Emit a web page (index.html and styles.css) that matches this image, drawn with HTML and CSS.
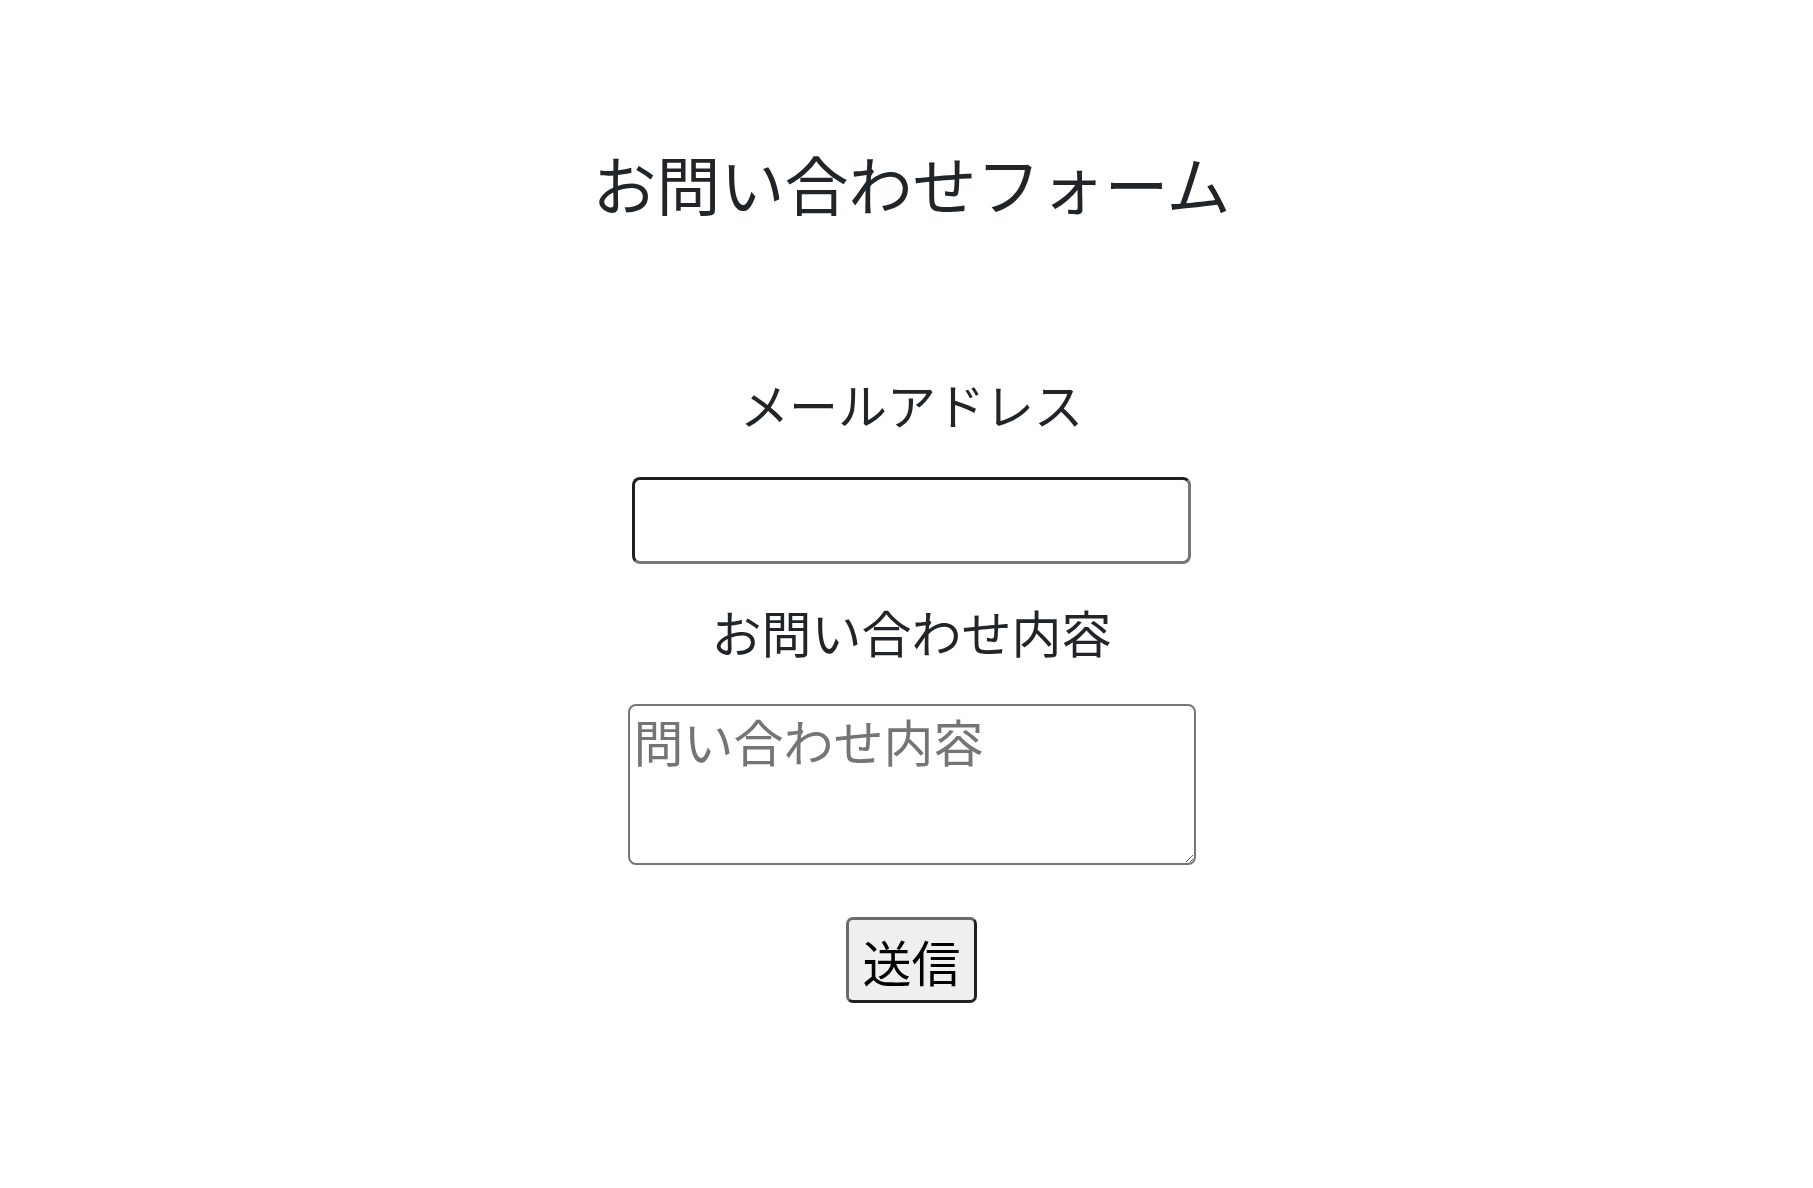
FILE: index.html
```html
<!DOCTYPE html>
<html lang="ja">
<head>
<meta charset="utf-8">
<title>お問い合わせフォーム</title>
<link rel="stylesheet" href="styles.css">
</head>
<body>
<main class="page">
  <h1 class="title">お問い合わせフォーム</h1>
  <form class="form">
    <label class="label label-email" for="email">メールアドレス</label>
    <input class="email" id="email" type="email">
    <label class="label label-message" for="message">お問い合わせ内容</label>
    <textarea class="message" id="message" placeholder="問い合わせ内容"></textarea>
    <button class="submit" type="submit">送信</button>
  </form>
</main>
</body>
</html>
```

FILE: styles.css
```css
html, body {
  margin: 0;
  padding: 0;
  background: #ffffff;
}

body {
  font-family: "Noto Sans CJK JP", "Noto Sans", sans-serif;
  color: #212529;
}

.page {
  display: flex;
  flex-direction: column;
  align-items: center;
  padding-left: 10px;
}

.title {
  margin: 147px 0 0;
  font-size: 64px;
  font-weight: 400;
  line-height: 70px;
  color: #212529;
}

.form {
  display: flex;
  flex-direction: column;
  align-items: center;
}

.label {
  display: block;
  font-size: 50px;
  line-height: 60px;
  color: #212529;
}

.label-email {
  margin-top: 157px;
  font-size: 49px;
}

.email {
  box-sizing: border-box;
  width: 559px;
  height: 87px;
  margin-top: 43px;
  border-width: 3px;
  border-style: solid;
  border-color: #1f1f1f #767676 #767676 #1f1f1f;
  border-radius: 8px;
  background: #ffffff;
  font-size: 40px;
  outline: none;
}

.label-message {
  margin-top: 37px;
}

.message {
  box-sizing: border-box;
  width: 568px;
  height: 161px;
  margin-top: 43px;
  padding: 4px 4px;
  border: 2px solid #767676;
  border-radius: 8px;
  font-family: "Noto Sans CJK JP", "Noto Sans", sans-serif;
  font-size: 50px;
  line-height: 1.2;
  color: #212529;
  background: #ffffff;
}

.message::placeholder {
  color: #757575;
  opacity: 1;
}

.submit {
  box-sizing: border-box;
  width: 131px;
  height: 86px;
  margin-top: 52px;
  padding: 0;
  border-width: 3px;
  border-style: solid;
  border-color: #6a6a6a #222222 #222222 #6a6a6a;
  border-radius: 7px;
  background: #efefef;
  font-family: "Noto Sans CJK JP", "Noto Sans", sans-serif;
  font-size: 49px;
  line-height: 1;
  color: #000000;
}
```
